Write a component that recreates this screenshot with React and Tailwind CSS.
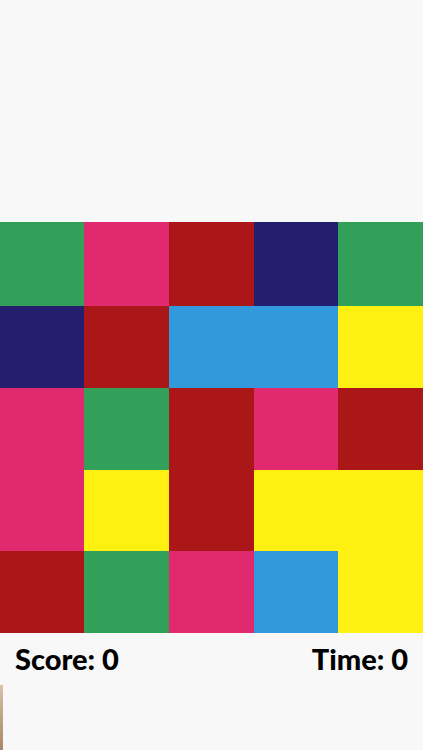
import React from "react";

const G = "bg-[#33a05a]";
const P = "bg-[#e0296f]";
const R = "bg-[#ab1719]";
const N = "bg-[#231f6e]";
const B = "bg-[#3399dd]";
const Y = "bg-[#fef010]";

const rows = [
  { h: "h-[84px]", cells: [G, P, R, N, G] },
  { h: "h-[82px]", cells: [N, R, B, B, Y] },
  { h: "h-[82px]", cells: [P, G, R, P, R] },
  { h: "h-[81px]", cells: [P, Y, R, Y, Y] },
  { h: "h-[82px]", cells: [R, G, P, B, Y] },
];

export default function App() {
  return (
    <div className="w-[423px] h-[750px] bg-[#f8f8f8] overflow-hidden flex flex-col">
      <div className="h-[222px]" />

      {/* board */}
      <div className="flex flex-col">
        {rows.map((row, i) => (
          <div key={i} className={`grid grid-cols-[84px_85px_85px_84px_85px] ${row.h}`}>
            {row.cells.map((c, j) => (
              <div key={j} className={c} />
            ))}
          </div>
        ))}
      </div>

      {/* score bar */}
      <div
        className="flex justify-between items-center h-[52px] pl-[15px] pr-[15px] text-[29px] font-black text-black"
        style={{ fontFamily: "Lato, 'DejaVu Sans', sans-serif" }}
      >
        <span>Score: 0</span>
        <span>Time: 0</span>
      </div>

      <div className="w-[3px] h-[65px] bg-gradient-to-b from-[#d8c0a8] to-[#a88868]" />
    </div>
  );
}
